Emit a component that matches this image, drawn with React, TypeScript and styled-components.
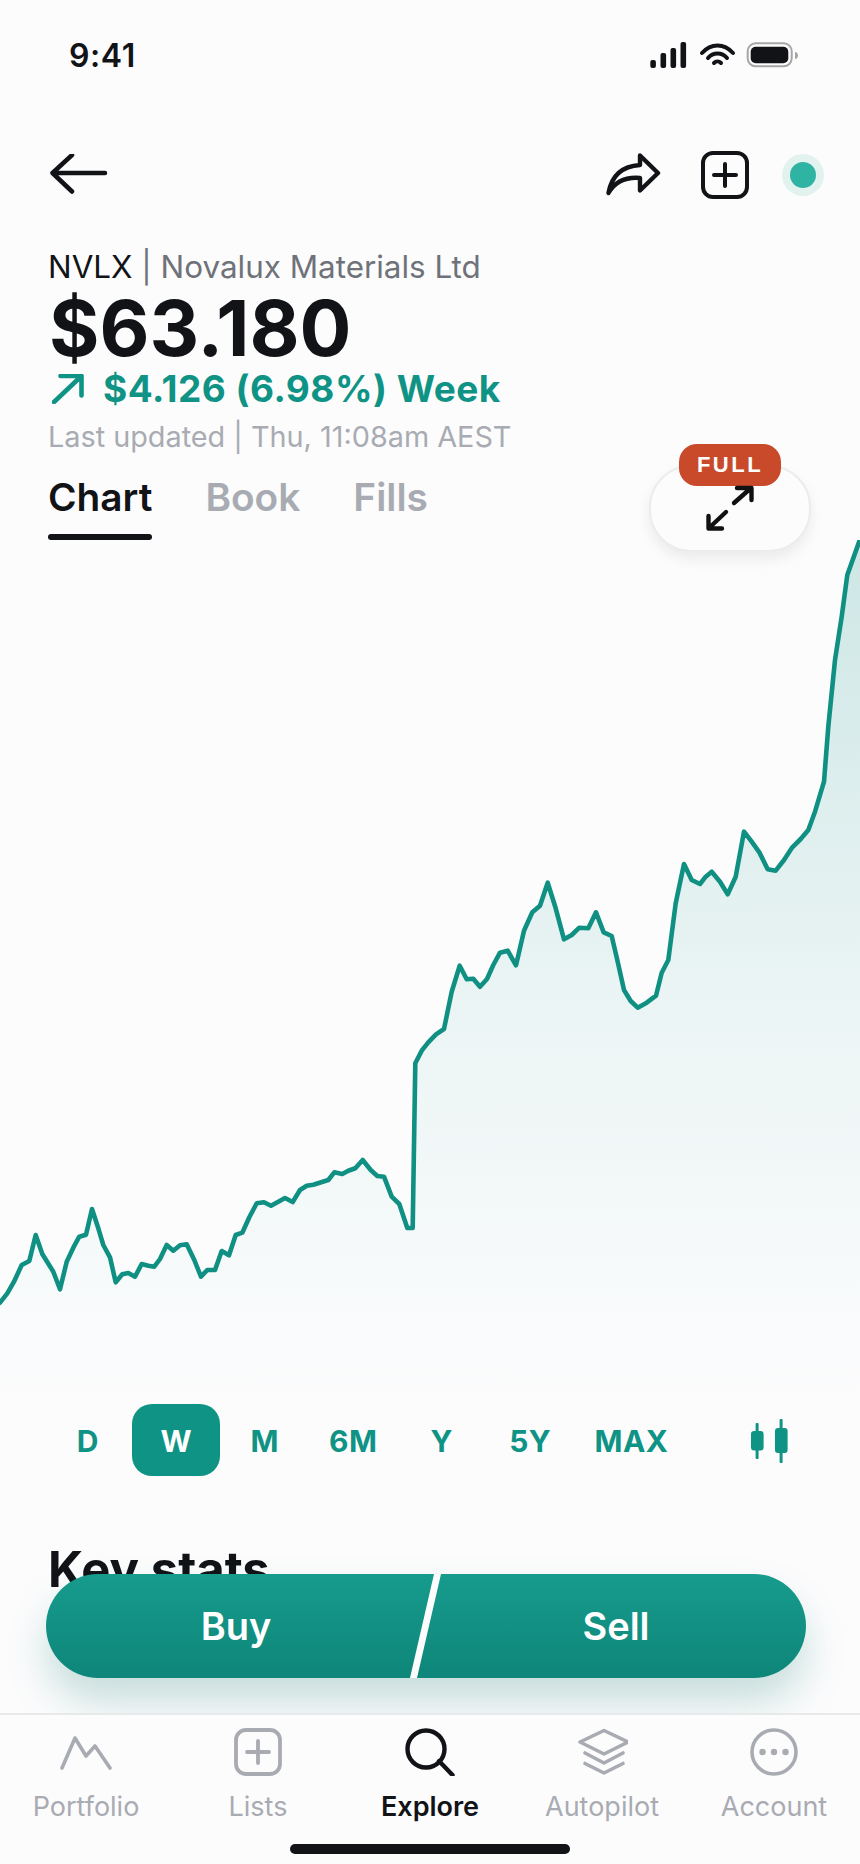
import React from "react";
import styled, { createGlobalStyle } from "styled-components";

const GlobalStyle = createGlobalStyle`
  html, body { margin: 0; padding: 0; background: #fcfcfd; }
  * { box-sizing: border-box; }
`;

const INK = "#111317";
const TEAL = "#0f9385";
const MUTED = "#a9abb2";

const Page = styled.div`
  position: relative;
  width: 860px;
  height: 1864px;
  overflow: hidden;
  display: flex;
  flex-direction: column;
  background: #fcfcfd;
  color: ${INK};
  font-family: Inter, "Noto Sans", sans-serif;
`;

const Main = styled.main`
  flex: 1;
  min-height: 0;
  overflow: hidden;
`;

const StatusBar = styled.div`
  height: 110px;
  padding: 0 62px 0 69px;
  display: flex;
  align-items: center;
  justify-content: space-between;
`;

const Clock = styled.span`
  font-size: 32px;
  font-weight: 600;
  letter-spacing: 0.6px;
`;

const NavBar = styled.div`
  height: 130px;
  padding: 0 36px 0 50px;
  display: flex;
  align-items: center;
  justify-content: space-between;
`;

const NavActions = styled.div`
  display: flex;
  align-items: center;
  gap: 33px;
`;

const IconSvg = styled.svg`
  display: block;
  flex: none;
`;

const ShareSvg = styled(IconSvg)`
  margin-right: 7px;
`;

const StatusDot = styled.span`
  width: 42px;
  height: 42px;
  border-radius: 50%;
  background: #e2f2ef;
  display: grid;
  place-items: center;
  &::after {
    content: "";
    width: 26px;
    height: 26px;
    border-radius: 50%;
    background: #2fb3a3;
  }
`;

const Header = styled.header`
  padding: 5px 48px 0;
  display: flex;
  flex-direction: column;
`;

const Title = styled.div`
  font-size: 31.4px;
  line-height: 44px;
  color: #6f7279;
  white-space: nowrap;
`;

const Ticker = styled.span`
  color: ${INK};
`;

const Price = styled.div`
  margin-top: 1px;
  padding-left: 1px;
  font-size: 77px;
  font-weight: 700;
  line-height: 76px;
`;

const Change = styled.div`
  display: flex;
  align-items: center;
  gap: 19px;
  margin-top: 1px;
  padding-left: 4px;
  font-size: 37px;
  font-weight: 700;
  line-height: 44px;
  letter-spacing: 0.5px;
  color: ${TEAL};
  white-space: nowrap;
`;

const Updated = styled.div`
  margin-top: 6px;
  font-size: 28.8px;
  line-height: 40px;
  color: ${MUTED};
  white-space: nowrap;
`;

const Tabs = styled.nav`
  display: flex;
  gap: 53px;
  height: 81px;
  margin-top: 2px;
`;

const Tab = styled.span<{ $active?: boolean }>`
  position: relative;
  font-size: 38.8px;
  font-weight: 600;
  line-height: 76px;
  color: ${(p) => (p.$active ? INK : MUTED)};
  &::after {
    content: "";
    display: ${(p) => (p.$active ? "block" : "none")};
    position: absolute;
    left: 0;
    right: 0;
    bottom: 0;
    height: 6px;
    border-radius: 3px;
    background: ${INK};
  }
`;

const FullButton = styled.button`
  position: absolute;
  top: 465px;
  left: 649px;
  width: 162px;
  height: 87px;
  padding: 0;
  border: 2px solid #ececec;
  border-radius: 42px;
  background: #fdfcfc;
  box-shadow: 0 7px 14px rgba(0, 0, 0, 0.07);
`;

const FullBadge = styled.span`
  position: absolute;
  top: -23px;
  left: 28px;
  width: 102px;
  height: 42px;
  border-radius: 18px;
  background: #c9492b;
  color: #fff;
  font-family: inherit;
  font-size: 22px;
  font-weight: 700;
  letter-spacing: 2.5px;
  line-height: 42px;
  text-align: center;
`;

const ExpandIcon = styled.svg`
  position: absolute;
  left: 54px;
  top: 15px;
`;

const ChartSvg = styled.svg`
  display: block;
  width: 860px;
  height: 860px;
`;

const Ranges = styled.div`
  height: 72px;
  margin-top: 4px;
  padding: 0 69px 0 43px;
  display: flex;
  align-items: center;
`;

const Range = styled.span<{ $active?: boolean; $wide?: boolean }>`
  width: ${(p) => (p.$wide ? 114 : 88.5)}px;
  height: 72px;
  padding: 1px 0 0 1px;
  border-radius: 20px;
  display: grid;
  place-items: center;
  font-size: 30px;
  font-weight: 700;
  letter-spacing: 0.5px;
  color: ${(p) => (p.$active ? "#fff" : TEAL)};
  background: ${(p) => (p.$active ? TEAL : "transparent")};
`;

const CandleSlot = styled.span`
  margin-left: auto;
  padding-top: 1px;
`;

const KeyStats = styled.h2`
  margin: 66px 0 0 48px;
  font-size: 49px;
  font-weight: 700;
  line-height: 56px;
`;

const TradeBar = styled.div`
  position: absolute;
  top: 1574px;
  left: 46px;
  width: 760px;
  height: 104px;
  border-radius: 52px;
  display: flex;
  background: linear-gradient(180deg, #169b8d 0%, #0e8679 100%);
  box-shadow: 0 24px 40px rgba(15, 120, 105, 0.22);
`;

const TradeButton = styled.button`
  flex: 1;
  border: 0;
  padding: 0;
  background: transparent;
  color: #fff;
  font-family: inherit;
  font-size: 38px;
  font-weight: 600;
`;

const TradeSlash = styled.span`
  position: absolute;
  top: 0;
  left: 376px;
  width: 7px;
  height: 104px;
  background: #fcfcfd;
  transform: skewX(-13deg);
`;

const TabBar = styled.footer`
  position: relative;
  z-index: 2;
  height: 151px;
  flex: none;
  background: #fcfcfd;
  border-top: 2px solid #e8e9ea;
  display: grid;
  grid-template-columns: repeat(5, 1fr);
`;

const TabItem = styled.div<{ $active?: boolean }>`
  display: flex;
  flex-direction: column;
  align-items: center;
  padding-top: 13px;
  font-size: 27px;
  font-weight: ${(p) => (p.$active ? 600 : 400)};
  color: ${(p) => (p.$active ? INK : MUTED)};
  line-height: 34px;
`;

const TabLabel = styled.span`
  margin-top: 14px;
`;

const HomeBar = styled.div`
  position: absolute;
  z-index: 3;
  left: 290px;
  bottom: 10px;
  width: 280px;
  height: 10px;
  border-radius: 5px;
  background: ${INK};
`;

// Traced chart points, grouped by the region they were read from.
const traced: { ox: number; oy: number; pts: number[] }[] = [
  {
    ox: 0, oy: 1100,
    pts: [0,608,22,580,42,545,65,495,88,483,107,405,127,462,160,515,180,568,200,485,220,443,238,410,258,404,276,327,295,385,310,435,330,472,347,547,367,523,385,519,405,530,425,492,445,497,463,500,480,477,500,435,520,452,540,436,560,433,583,480,603,530,622,510,645,510,665,453,687,466,707,405,727,398,748,352,770,310,792,307,813,317,835,305,855,294,878,306,900,270,920,257,940,254,985,240,1003,217,1027,222,1045,212,1066,205,1088,180,1112,210,1132,228,1152,230,1175,290,1198,312,1222,384,1238,384],
  },
  {
    ox: 390, oy: 820,
    pts: [76,730,95,692,115,667,138,643,162,627,185,515,209,437,230,478,250,476,270,500,291,477,310,435,330,398,353,392,378,436,402,332,427,277,450,257,473,188,497,265,522,358,545,345,568,323,595,325,618,277,641,337,665,348,683,425,702,510,722,543,743,563,770,548,798,527,815,458,835,420,857,250,882,132,905,180,930,192,947,170,965,155,990,185,1013,223,1037,170,1062,35,1085,65,1108,97,1133,148,1157,152,1182,120,1207,82,1232,57,1255,30],
  },
  {
    ox: 700, oy: 520,
    pts: [345,875,372,785,385,620,405,420,425,290,442,165,480,58],
  },
];

const CHART_TOP = 540;
const linePoints: [number, number][] = traced.flatMap(({ ox, oy, pts }) => {
  const out: [number, number][] = [];
  for (let i = 0; i < pts.length; i += 2) {
    out.push([ox + pts[i] / 3, oy + pts[i + 1] / 3 - CHART_TOP]);
  }
  return out;
});
const lineD = linePoints.map(([x, y], i) => `${i ? "L" : "M"}${x.toFixed(1)} ${y.toFixed(1)}`).join(" ");
const areaD = `${lineD} L860 860 L0 860 Z`;

const ranges = ["D", "W", "M", "6M", "Y", "5Y", "MAX"];

const StatusIcons = () => (
  <IconSvg width="148" height="26" viewBox="650 42 148 26" style={{ overflow: "visible" }}>
    <g fill={INK}>
      <rect x="650.3" y="60" width="5.6" height="8" rx="2" />
      <rect x="660.5" y="53" width="5.6" height="15" rx="2" />
      <rect x="670.5" y="48" width="5.6" height="20" rx="2" />
      <rect x="680.5" y="42" width="5.6" height="26" rx="2" />
    </g>
    <g fill="none" stroke={INK} strokeWidth="4" strokeLinecap="round">
      <path d="M702 53 C711 43 724 43 733 53" />
      <path d="M708 58 C713 52 722 52 727 58" />
      <path d="M714 63 C716 61 719 61 721 63" />
    </g>
    <rect x="747.7" y="43.3" width="44" height="23" rx="8" fill="none" stroke="#a6a6a6" strokeWidth="2" />
    <rect x="750.7" y="46.7" width="37.6" height="16.6" rx="5" fill={INK} />
    <path d="M795 52 C797 52 798 54 798 55.5 C798 57 797 59 795 59 Z" fill="#a6a6a6" />
  </IconSvg>
);

const BackIcon = () => (
  <IconSvg width="58" height="42" viewBox="50 154 58 42" fill="none" stroke={INK} strokeWidth="4.5" strokeLinecap="round" strokeLinejoin="round">
    <path d="M52.5 173 H105 M72 155 L52.5 173 L72 191.5" />
  </IconSvg>
);

const ShareIcon = () => (
  <ShareSvg width="56" height="44" viewBox="605 153 56 44" fill="none" stroke={INK} strokeWidth="4.4" strokeLinecap="round" strokeLinejoin="round">
    <path d="M608.5 193 C612 173 625 166 640 165 L640 155.5 L658 173 L640 190.5 L640 178 C628 177 616 180 608.5 193 Z" />
  </ShareSvg>
);

const PlusSquare = ({ color, size = 48, sw = 4 }: { color: string; size?: number; sw?: number }) => (
  <IconSvg width={size} height={size} viewBox="0 0 48 48" fill="none" stroke={color} strokeWidth={sw} strokeLinecap="round">
    <rect x="2" y="2" width="44" height="44" rx="10" />
    <path d="M24 13 V35 M13 24 H35" />
  </IconSvg>
);

const UpArrow = () => (
  <IconSvg width="32" height="30" viewBox="51 376 32 30" fill="none" stroke={TEAL} strokeWidth="4.6" strokeLinecap="round" strokeLinejoin="round">
    <path d="M53 404 L80.5 378 M59.5 378 H80.5 V397.5" />
  </IconSvg>
);

const Candles = () => (
  <IconSvg width="41" height="44" viewBox="749 1418 41 44" fill={TEAL}>
    <rect x="754.6" y="1422" width="3" height="36" rx="1" />
    <rect x="750" y="1430" width="12.6" height="19.5" rx="3" />
    <rect x="778.6" y="1418" width="3" height="44" rx="1" />
    <rect x="774" y="1427" width="12.6" height="25" rx="3" />
  </IconSvg>
);

const tabs = [
  {
    label: "Portfolio",
    icon: (
      <IconSvg width="52" height="48" viewBox="60 1728 52 48" fill="none" stroke={MUTED} strokeWidth="3.6" strokeLinecap="round" strokeLinejoin="round">
        <path d="M62 1768 L75 1738 L86 1756 L95 1746 L110 1768" />
      </IconSvg>
    ),
  },
  { label: "Lists", icon: <PlusSquare color={MUTED} sw={3.8} /> },
  {
    label: "Explore",
    active: true,
    icon: (
      <IconSvg width="52" height="48" viewBox="404 1728 52 48" fill="none" stroke={INK} strokeWidth="4.4" strokeLinecap="round">
        <circle cx="426" cy="1749" r="18.5" />
        <path d="M439 1761 L452.5 1775" />
      </IconSvg>
    ),
  },
  {
    label: "Autopilot",
    icon: (
      <IconSvg width="52" height="48" viewBox="575 1728 52 48" fill="none" stroke={MUTED} strokeWidth="3.6" strokeLinecap="round" strokeLinejoin="round">
        <path d="M579 1742 L603 1730.5 L627 1742 L603 1754 Z" />
        <path d="M584 1753 L603 1763 L622 1753" />
        <path d="M584 1763.5 L603 1773 L622 1763.5" />
      </IconSvg>
    ),
  },
  {
    label: "Account",
    icon: (
      <IconSvg width="48" height="48" viewBox="0 0 48 48" fill="none" stroke={MUTED} strokeWidth="3.6">
        <circle cx="24" cy="24" r="22" />
        <g fill={MUTED} stroke="none">
          <circle cx="12.5" cy="24" r="3.2" />
          <circle cx="24" cy="24" r="3.2" />
          <circle cx="35.5" cy="24" r="3.2" />
        </g>
      </IconSvg>
    ),
  },
];

export default function App() {
  return (
    <Page>
      <GlobalStyle />
      <Main>
        <StatusBar>
          <Clock>9:41</Clock>
          <StatusIcons />
        </StatusBar>
        <NavBar>
          <BackIcon />
          <NavActions>
            <ShareIcon />
            <PlusSquare color={INK} />
            <StatusDot />
          </NavActions>
        </NavBar>
        <Header>
          <Title>
            <Ticker>NVLX</Ticker> | Novalux Materials Ltd
          </Title>
          <Price>$63.180</Price>
          <Change>
            <UpArrow />
            <span>$4.126 (6.98%) Week</span>
          </Change>
          <Updated>Last updated | Thu, 11:08am AEST</Updated>
          <Tabs>
            <Tab $active>Chart</Tab>
            <Tab>Book</Tab>
            <Tab>Fills</Tab>
          </Tabs>
        </Header>
        <ChartSvg viewBox="0 0 860 860">
          <defs>
            <linearGradient id="area" gradientUnits="userSpaceOnUse" x1="0" y1="0" x2="0" y2="860">
              <stop offset="0" stopColor="#0f9385" stopOpacity="0.2" />
              <stop offset="0.55" stopColor="#0f9385" stopOpacity="0.07" />
              <stop offset="0.9" stopColor="#0f9385" stopOpacity="0.015" />
              <stop offset="1" stopColor="#0f9385" stopOpacity="0" />
            </linearGradient>
          </defs>
          <path d={areaD} fill="url(#area)" />
          <path d={lineD} fill="none" stroke="#0f9083" strokeWidth="4.6" strokeLinejoin="round" strokeLinecap="round" />
        </ChartSvg>
        <Ranges>
          {ranges.map((r) => (
            <Range key={r} $active={r === "W"} $wide={r === "MAX"}>
              {r}
            </Range>
          ))}
          <CandleSlot>
            <Candles />
          </CandleSlot>
        </Ranges>
        <KeyStats>Key stats</KeyStats>
      </Main>

      <FullButton aria-label="Full screen">
        <FullBadge>FULL</FullBadge>
        <ExpandIcon width="50" height="50" viewBox="705 482 50 50" fill="none" stroke="#111" strokeWidth="4.4" strokeLinecap="round" strokeLinejoin="round">
          <path d="M734 503 L751 488 M737 488 H751.5 V500" />
          <path d="M726 512 L709 528 M722 528.5 H708.5 V516" />
        </ExpandIcon>
      </FullButton>

      <TradeBar>
        <TradeButton>Buy</TradeButton>
        <TradeButton>Sell</TradeButton>
        <TradeSlash />
      </TradeBar>

      <TabBar>
        {tabs.map((t) => (
          <TabItem key={t.label} $active={t.active}>
            {t.icon}
            <TabLabel>{t.label}</TabLabel>
          </TabItem>
        ))}
      </TabBar>
      <HomeBar />
    </Page>
  );
}
